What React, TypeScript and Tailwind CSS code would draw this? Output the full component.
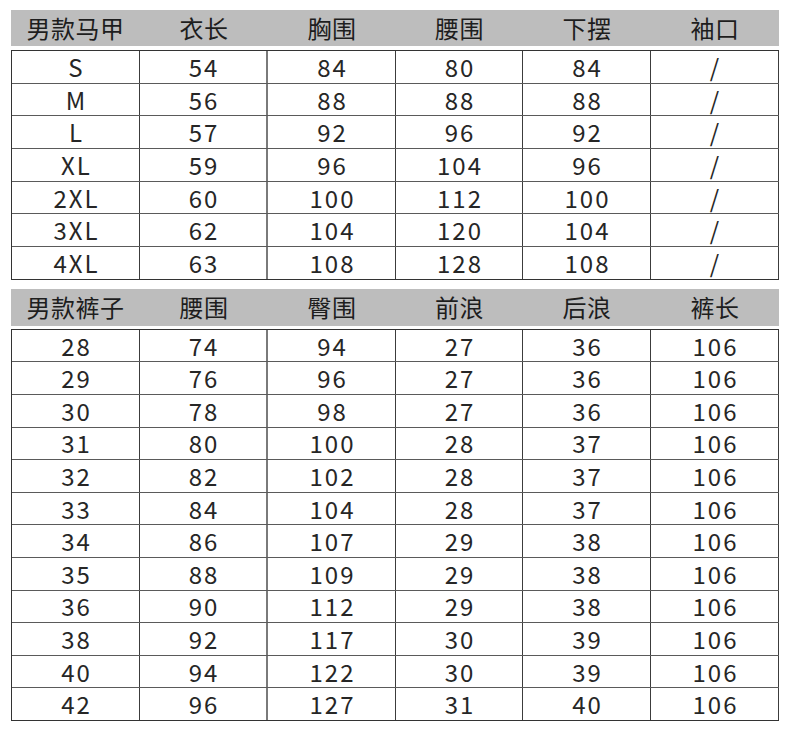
const vest = {
  headers: ["男款马甲", "衣长", "胸围", "腰围", "下摆", "袖口"],
  rows: [
    ["S", "54", "84", "80", "84", "/"],
    ["M", "56", "88", "88", "88", "/"],
    ["L", "57", "92", "96", "92", "/"],
    ["XL", "59", "96", "104", "96", "/"],
    ["2XL", "60", "100", "112", "100", "/"],
    ["3XL", "62", "104", "120", "104", "/"],
    ["4XL", "63", "108", "128", "108", "/"],
  ],
}

const pants = {
  headers: ["男款裤子", "腰围", "臀围", "前浪", "后浪", "裤长"],
  rows: [
    ["28", "74", "94", "27", "36", "106"],
    ["29", "76", "96", "27", "36", "106"],
    ["30", "78", "98", "27", "36", "106"],
    ["31", "80", "100", "28", "37", "106"],
    ["32", "82", "102", "28", "37", "106"],
    ["33", "84", "104", "28", "37", "106"],
    ["34", "86", "107", "29", "38", "106"],
    ["35", "88", "109", "29", "38", "106"],
    ["36", "90", "112", "29", "38", "106"],
    ["38", "92", "117", "30", "39", "106"],
    ["40", "94", "122", "30", "39", "106"],
    ["42", "96", "127", "31", "40", "106"],
  ],
}

// column widths incl. right border; col 2 has the heavier grey divider
const cellCls = [
  "w-[128px] border-r border-[#3c3c3c]",
  "w-[128px] border-r-2 border-[#7a7a7a]",
  "w-[128px] border-r border-[#3c3c3c]",
  "w-[127px] border-r border-[#3c3c3c]",
  "w-[128px] border-r border-[#3c3c3c]",
  "w-[128px] border-r border-[#3c3c3c]",
]

const headCls = ["w-[129px]", "w-[128px]", "w-[128px]", "w-[127px]", "w-[128px]", "w-[128px]"]

function SizeTable({ headers, rows, headH, gap, rowH }: { headers: string[]; rows: string[][]; headH: string; gap: string; rowH: string }) {
  return (
    <div className="w-[768px]">
      <div className={`flex items-center bg-[#bdbdbd] ${headH}`}>
        {headers.map((h, i) => (
          <div key={i} className={`${headCls[i]} text-center tracking-[0.5px]`}>
            {h}
          </div>
        ))}
      </div>
      <div className={`${gap} border-t border-l border-[#333]`}>
        {rows.map((r, ri) => (
          <div key={ri} className={`flex box-border border-b ${ri === rows.length - 1 ? "border-[#333]" : "border-[#5a5a5a]"} ${rowH}`}>
            {r.map((c, ci) => (
              <div key={ci} className={`${cellCls[ci]} flex items-center justify-center pl-[2px] tracking-[2px] text-[#262626]`}>
                {c}
              </div>
            ))}
          </div>
        ))}
      </div>
    </div>
  )
}

export default function App() {
  return (
    <div
      className="w-[790px] h-[741px] bg-white pt-[10px] pl-[11px] text-[24px] leading-none text-[#1e1e1e]"
      style={{ fontFamily: '"Noto Sans CJK SC", "Noto Sans", sans-serif' }}
    >
      <SizeTable headers={vest.headers} rows={vest.rows} headH="h-[36px]" gap="mt-[4px]" rowH="h-[32.7px]" />
      <div className="h-[9px]" />
      <SizeTable headers={pants.headers} rows={pants.rows} headH="h-[37px]" gap="mt-[3px]" rowH="h-[32.6px]" />
    </div>
  )
}
